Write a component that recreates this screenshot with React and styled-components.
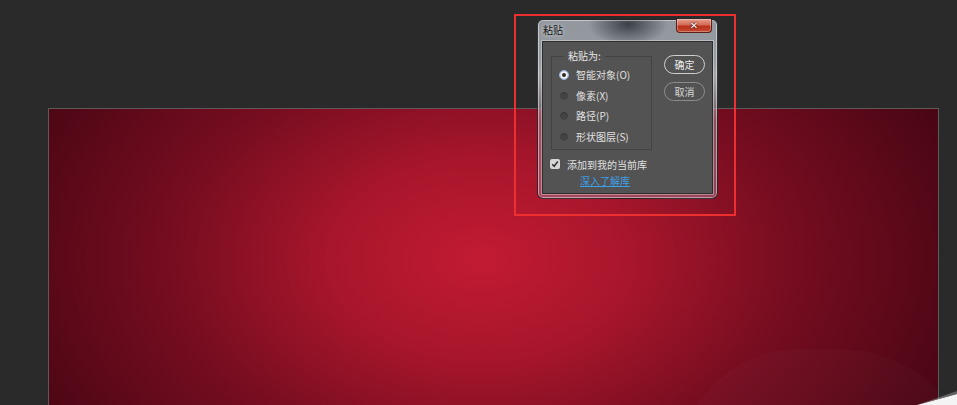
import React from "react";
import styled, { createGlobalStyle } from "styled-components";

const Global = createGlobalStyle`
  html, body { margin: 0; padding: 0; background: #2a2a2a; overflow: hidden; }
  * { box-sizing: border-box; }
`;

const FONT = `"Noto Sans CJK SC", "Noto Sans", "Liberation Sans", sans-serif`;

const Screen = styled.div`
  position: relative;
  width: 957px;
  height: 405px;
  overflow: hidden;
  background: #2a2a2a;
  padding: 108px 0 0 48px;
  font-family: ${FONT};
`;

const Canvas = styled.div`
  position: relative;
  width: 891px;
  height: 330px;
  border: 1px solid #5e5a5a;
  background:
    radial-gradient(ellipse 500px 330px at 432px 150px, #c21b33 0%, #a8162b 30%, #760d20 62%, #4a0614 100%);
  overflow: hidden;
  &::after {
    content: "";
    position: absolute;
    left: 630px;
    top: 240px;
    width: 300px;
    height: 200px;
    border-radius: 120px 140px 0 0;
    background: rgba(255, 255, 255, 0.018);
  }
`;

const Highlight = styled.div`
  position: absolute;
  left: 514px;
  top: 14px;
  width: 222px;
  height: 202px;
  border: 2px solid #ee2f2f;
`;

const Dialog = styled.div`
  position: absolute;
  left: 537px;
  top: 19px;
  width: 181px;
  height: 180px;
  border-radius: 6px;
  border: 1px solid rgba(20, 20, 24, 0.75);
  box-shadow: inset 0 0 0 1px rgba(255, 255, 255, 0.45);
  background:
    radial-gradient(ellipse 40px 22px at 90px 4px, rgba(50, 54, 61, 0.9), rgba(50, 54, 61, 0) 100%),
    linear-gradient(to bottom, rgba(150, 156, 163, 0.97) 0px, rgba(160, 165, 170, 0.92) 40px, rgba(195, 195, 200, 0.8) 55px, rgba(160, 140, 150, 0.55) 100px, rgba(160, 120, 140, 0.5) 100%);
  padding: 0 4px 4px 4px;
  display: flex;
  flex-direction: column;
`;

const TitleBar = styled.div`
  height: 21px;
  display: flex;
  align-items: flex-start;
  justify-content: space-between;
`;

const Title = styled.span`
  font-size: 10px;
  color: #151515;
  line-height: 20px;
  padding-left: 1px;
  text-shadow: 0 0 4px rgba(255, 255, 255, 0.8);
`;

const CloseButton = styled.div`
  width: 36px;
  height: 14px;
  margin-top: -1px;
  margin-right: 1px;
  border: 1px solid #5a1f18;
  border-top: none;
  border-radius: 0 0 4px 4px;
  background: linear-gradient(to bottom, #e6a090 0%, #d46a55 45%, #b8301c 55%, #c44a30 100%);
  box-shadow: inset 0 0 0 1px rgba(255, 255, 255, 0.3);
  display: flex;
  align-items: center;
  justify-content: center;
  color: #fff;
  font-family: "DejaVu Sans", sans-serif;
  font-weight: bold;
  font-size: 10px;
  line-height: 1;
  text-shadow: 0 0 1px #3a0a05, 0 0 2px #3a0a05;
`;

const Panel = styled.div`
  width: 171px;
  height: 153px;
  background: #535353;
  border: 1px solid #2e2e2e;
  box-shadow: 0 0 0 1px rgba(255, 255, 255, 0.35);
  padding: 14px 0 0 8px;
  color: #e0e0e0;
  font-size: 10px;
`;

const TopRow = styled.div`
  display: flex;
  align-items: flex-start;
`;

const GroupBox = styled.div`
  position: relative;
  width: 101px;
  height: 94px;
  border: 1px solid #434343;
  padding-top: 8px;
  display: grid;
  grid-auto-rows: 20.5px;
`;

const Legend = styled.span`
  position: absolute;
  left: 12px;
  top: -8px;
  padding: 0 4px;
  background: #535353;
  line-height: 14px;
  color: #e6e6e6;
`;

const RadioRow = styled.div`
  display: flex;
  align-items: center;
  padding-left: 7px;
  gap: 7px;
  line-height: 14px;
`;

const Radio = styled.span`
  width: 10px;
  height: 10px;
  border-radius: 50%;
  flex: none;
  background: ${(p) => (p.$on ? "#f2f2f2" : "#444444")};
  border: 1px solid ${(p) => (p.$on ? "#8fb4e6" : "#575757")};
  box-shadow: ${(p) => (p.$on ? "inset 0 0 0 2px #f2f2f2, inset 0 0 0 5px #2a2a2a" : "inset 0 1px 1px rgba(0,0,0,0.25)")};
`;

const ButtonCol = styled.div`
  display: flex;
  flex-direction: column;
  gap: 8px;
  margin-left: 12px;
  margin-top: -1px;
`;

const Button = styled.div`
  width: 41px;
  height: 19px;
  border-radius: 10px;
  border: 1px solid ${(p) => (p.$primary ? "#cfcfcf" : "#8c8c8c")};
  display: flex;
  align-items: center;
  justify-content: center;
  color: ${(p) => (p.$primary ? "#ececec" : "#d6d6d6")};
  font-size: 10px;
  line-height: 1;
`;

const CheckRow = styled.div`
  display: flex;
  align-items: center;
  gap: 7px;
  margin-top: 7px;
  height: 14px;
  margin-left: -1px;
`;

const CheckBox = styled.span`
  width: 10px;
  height: 10px;
  border-radius: 2px;
  background: #d6d6d6;
  display: flex;
  align-items: center;
  justify-content: center;
`;

const LinkRow = styled.div`
  margin-top: 3px;
  height: 14px;
  line-height: 14px;
  padding-left: 29px;
`;

const Link = styled.a`
  color: #3e9ee6;
  text-decoration: underline;
  cursor: pointer;
`;

const Curl = styled.svg`
  position: absolute;
  right: 0;
  bottom: 0;
`;

export default function App() {
  const items = [
    ["智能对象(O)", true],
    ["像素(X)", false],
    ["路径(P)", false],
    ["形状图层(S)", false],
  ];
  return (
    <>
      <Global />
      <Screen>
        <Canvas />
        <Highlight />
        <Dialog>
          <TitleBar>
            <Title>粘贴</Title>
            <CloseButton>✕</CloseButton>
          </TitleBar>
          <Panel>
            <TopRow>
              <GroupBox>
                <Legend>粘贴为:</Legend>
                {items.map(([label, on]) => (
                  <RadioRow key={label}>
                    <Radio $on={on} />
                    <span>{label}</span>
                  </RadioRow>
                ))}
              </GroupBox>
              <ButtonCol>
                <Button $primary>确定</Button>
                <Button>取消</Button>
              </ButtonCol>
            </TopRow>
            <CheckRow>
              <CheckBox>
                <svg width="8" height="8" viewBox="0 0 8 8">
                  <path d="M1.2 4.2 L3.2 6.2 L6.8 1.6" fill="none" stroke="#333" strokeWidth="1.6" />
                </svg>
              </CheckBox>
              <span>添加到我的当前库</span>
            </CheckRow>
            <LinkRow>
              <Link>深入了解库</Link>
            </LinkRow>
          </Panel>
        </Dialog>
        <Curl width="40" height="14" viewBox="0 0 40 14">
          <polygon points="0,14 40,3 40,14" fill="#f4f4f4" />
          <polygon points="0,14 40,0 40,3" fill="#8a8a8a" opacity="0.6" />
        </Curl>
      </Screen>
    </>
  );
}
